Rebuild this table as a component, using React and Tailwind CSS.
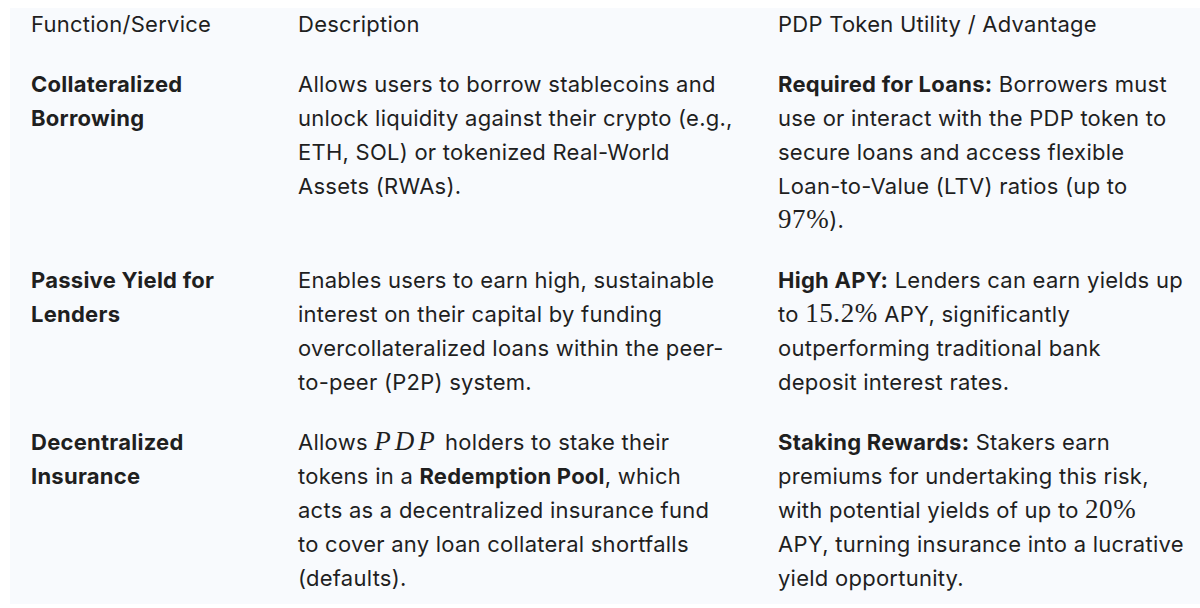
import React from "react";

const sans = { fontFamily: "Inter, 'Noto Sans', Roboto, sans-serif" };

function M({ children, italic }) {
  // little TeX-looking bits (numbers, symbols)
  return (
    <span
      className={
        italic
          ? "text-[27px] italic tracking-[4px] leading-none"
          : "text-[27px] tracking-[0.6px] leading-none"
      }
      style={{ fontFamily: "'Liberation Serif', 'DejaVu Serif', serif" }}
    >
      {children}
    </span>
  );
}

const rows = [
  {
    fn: (
      <>
        Collateralized
        <br />
        Borrowing
      </>
    ),
    desc: (
      <>
        Allows users to borrow stablecoins and
        <br />
        unlock liquidity against their crypto (e.g.,
        <br />
        ETH, SOL) or tokenized Real-World
        <br />
        Assets (RWAs).
      </>
    ),
    adv: (
      <>
        <b className="font-bold">Required for Loans:</b> Borrowers must
        <br />
        use or interact with the PDP token to
        <br />
        secure loans and access flexible
        <br />
        Loan-to-Value (LTV) ratios (up to
        <br />
        <M>97%</M>).
      </>
    ),
  },
  {
    fn: (
      <>
        Passive Yield for
        <br />
        Lenders
      </>
    ),
    desc: (
      <>
        Enables users to earn high, sustainable
        <br />
        interest on their capital by funding
        <br />
        overcollateralized loans within the peer-
        <br />
        to-peer (P2P) system.
      </>
    ),
    adv: (
      <>
        <b className="font-bold">High APY:</b> Lenders can earn yields up
        <br />
        to <M>15.2%</M> APY, significantly
        <br />
        outperforming traditional bank
        <br />
        deposit interest rates.
      </>
    ),
  },
  {
    fn: (
      <>
        Decentralized
        <br />
        Insurance
      </>
    ),
    desc: (
      <>
        Allows <M italic>PDP</M> holders to stake their
        <br />
        tokens in a <b className="font-bold">Redemption Pool</b>, which
        <br />
        acts as a decentralized insurance fund
        <br />
        to cover any loan collateral shortfalls
        <br />
        (defaults).
      </>
    ),
    adv: (
      <>
        <b className="font-bold">Staking Rewards:</b> Stakers earn
        <br />
        premiums for undertaking this risk,
        <br />
        with potential yields of up to <M>20%</M>
        <br />
        APY, turning insurance into a lucrative
        <br />
        yield opportunity.
      </>
    ),
  },
];

export default function App() {
  return (
    <div className="w-[1200px] h-[608px] bg-white pt-2 pl-[10px] overflow-hidden" style={sans}>
      <div className="h-[596px] bg-[#f8fafd] pl-[21px] text-[22px] tracking-[0.25px] text-[#1f1f1f]">
        <div className="grid grid-cols-[267px_480px_1fr] leading-[32px] whitespace-nowrap">
          <div>Function/Service</div>
          <div>Description</div>
          <div>PDP Token Utility / Advantage</div>
        </div>

        <div className="flex flex-col gap-[26px] mt-[27px]">
          {rows.map((r, i) => (
            <div
              key={i}
              className="grid grid-cols-[267px_480px_1fr] leading-[34px] whitespace-nowrap"
            >
              <div className="font-bold">{r.fn}</div>
              <div>{r.desc}</div>
              <div>{r.adv}</div>
            </div>
          ))}
        </div>
      </div>
    </div>
  );
}
